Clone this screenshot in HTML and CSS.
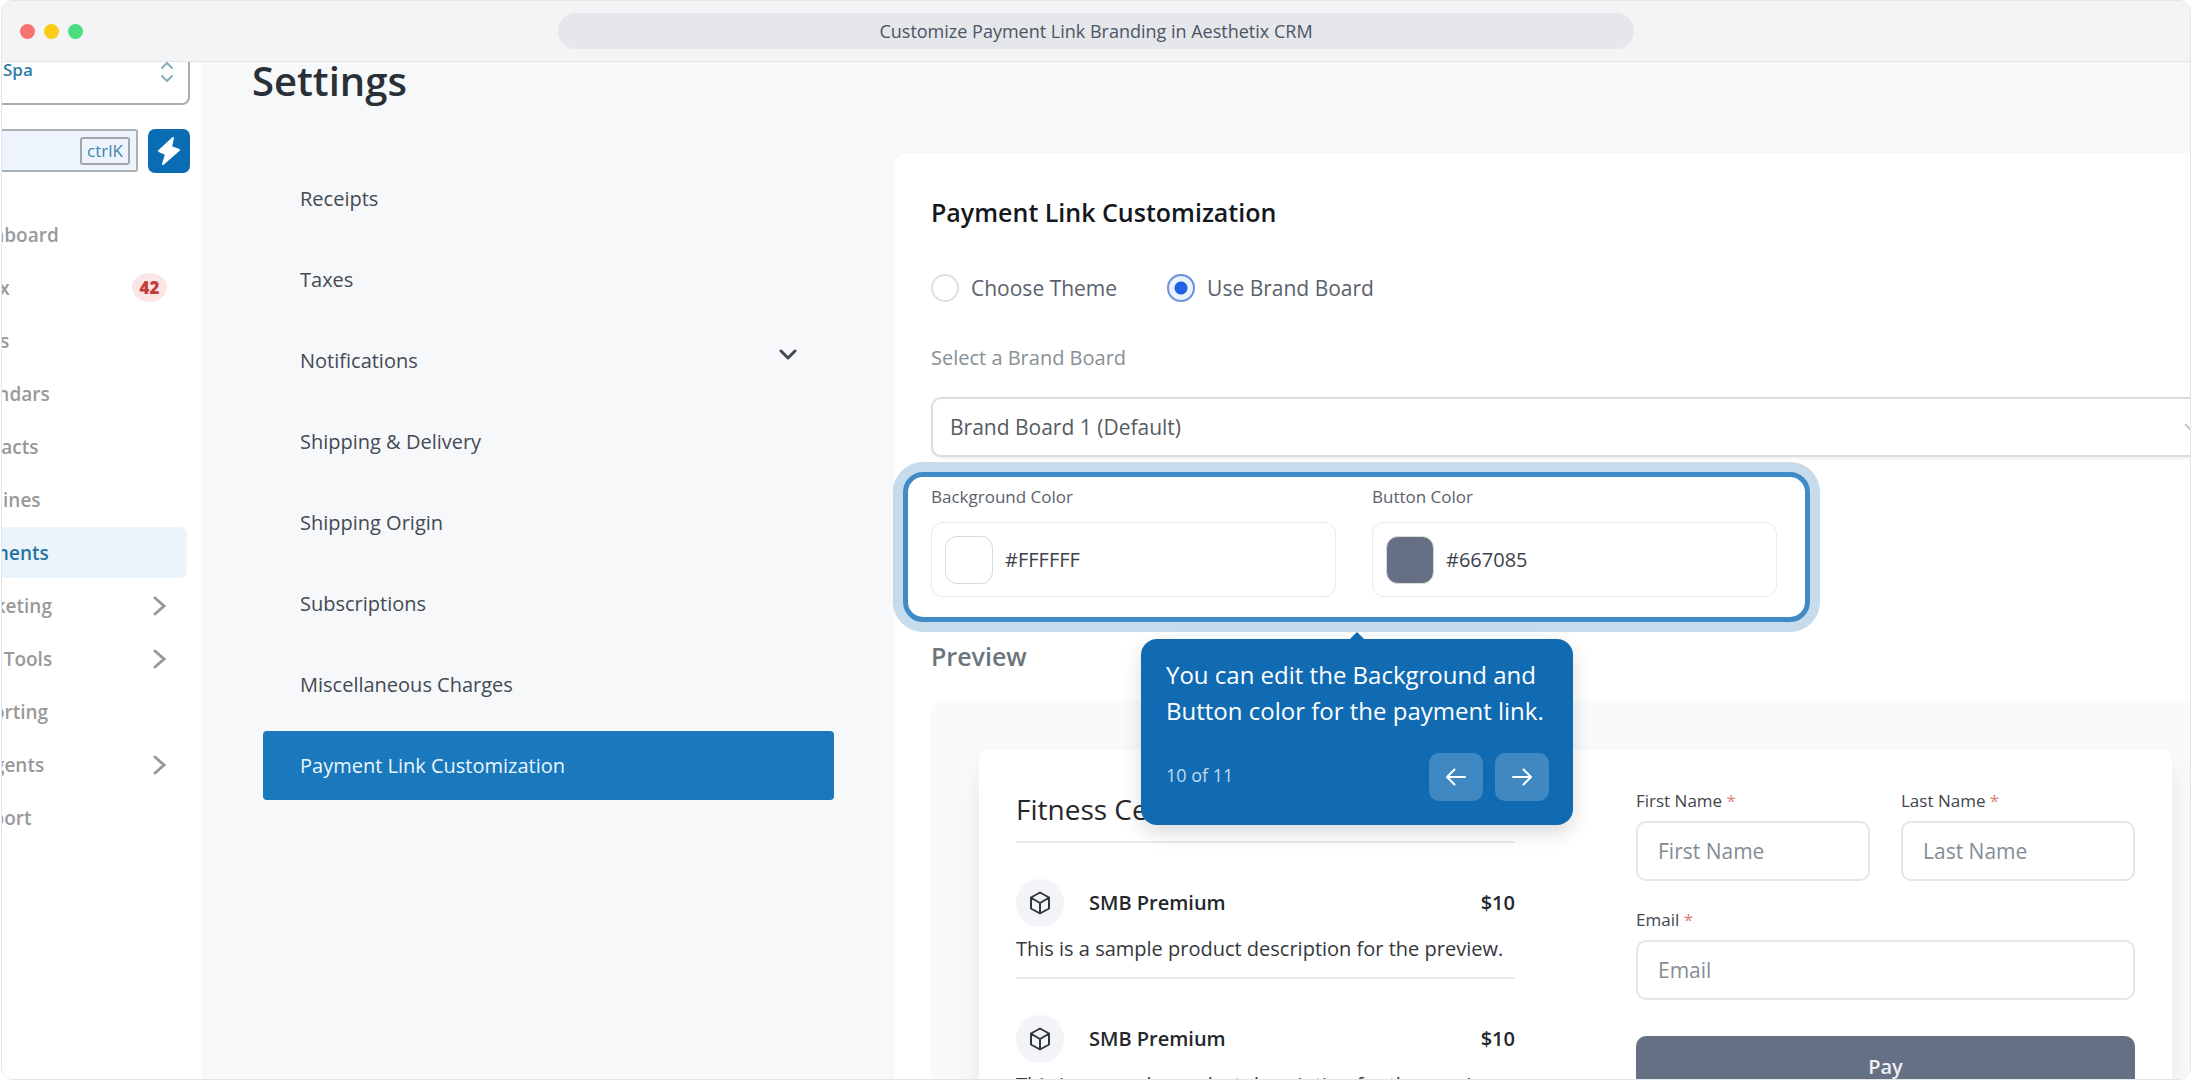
FILE: index.html
```html
<!DOCTYPE html>
<html lang="en">
	<head>
		<meta charset="utf-8">
		<title>Customize Payment Link Branding in Aesthetix CRM</title>
		<link rel="stylesheet" href="styles.css">
	</head>
	<body>
		<div class="window">
			<header class="titlebar">
				<div class="dots">
					<span class="dot red"></span>
					<span class="dot yellow"></span>
					<span class="dot green"></span>
				</div>
				<div class="address">Customize Payment Link Branding in Aesthetix CRM</div>
			</header>

			<div class="app">
				<aside class="sidebar">
					<button class="account" type="button">
						<span>Spa</span>
						<svg width="14" height="20" viewBox="0 0 14 20" fill="none" stroke="currentColor" stroke-width="2" stroke-linecap="round" stroke-linejoin="round"><path d="M2 6l5-5 5 5M2 14l5 5 5-5"/></svg>
					</button>
					<div class="searchRow">
						<div class="search">
							<input class="searchInput" type="search" aria-label="Search">
							<kbd>ctrlK</kbd>
						</div>
						<button class="bolt" type="button" aria-label="Quick actions">
							<svg width="24" height="30" viewBox="0 0 24 30" fill="#fff" stroke="#fff" stroke-width="2" stroke-linejoin="round"><path d="M16 2L2 15l7 3-3 10 16-14-8-3z"/></svg>
						</button>
					</div>
					<nav class="nav">
						<a href="#"><span>Dashboard</span></a>
						<a href="#"><span>Inbox</span><b class="badge">42</b></a>
						<a href="#"><span>Tasks</span></a>
						<a href="#"><span>Calendars</span></a>
						<a href="#"><span>Contacts</span></a>
						<a href="#"><span>Pipelines</span></a>
						<a href="#" class="active"><span>Payments</span></a>
						<a href="#"><span>Marketing</span><svg class="more" viewBox="0 0 14 20"><path d="M2 2l9 8-9 8"/></svg></a>
						<a href="#"><span>Web Tools</span><svg class="more" viewBox="0 0 14 20"><path d="M2 2l9 8-9 8"/></svg></a>
						<a href="#"><span>Reporting</span></a>
						<a href="#"><span>AI Agents</span><svg class="more" viewBox="0 0 14 20"><path d="M2 2l9 8-9 8"/></svg></a>
						<a href="#"><span>Support</span></a>
					</nav>
				</aside>

				<main class="main">
					<h1>Settings</h1>
					<div class="columns">
						<nav class="menu">
							<a href="#">Receipts</a>
							<a href="#">Taxes</a>
							<a href="#">Notifications
								<svg class="down" width="18" height="12" viewBox="0 0 18 12"><path d="M2 2l7 7 7-7"/></svg>
							</a>
							<a href="#">Shipping &amp; Delivery</a>
							<a href="#">Shipping Origin</a>
							<a href="#">Subscriptions</a>
							<a href="#">Miscellaneous Charges</a>
							<a href="#" class="selected">Payment Link Customization</a>
						</nav>

						<section class="panel">
							<h2>Payment Link Customization</h2>
							<div class="radios">
								<label><input type="radio" name="mode"> Choose Theme</label>
								<label><input type="radio" name="mode" checked> Use Brand Board</label>
							</div>

							<label class="selectLabel" for="board">Select a Brand Board</label>
							<div class="selectBox">
								<select id="board">
									<option>Brand Board 1 (Default)</option>
								</select>
								<svg width="18" height="12" viewBox="0 0 18 12" fill="none" stroke="currentColor" stroke-width="2"><path d="M1 2l8 8 8-8"/></svg>
							</div>

							<div class="colors">
								<div class="color">
									<label for="bgColor">Background Color</label>
									<div class="colorBox">
										<span class="swatch white"></span>
										<input id="bgColor" type="text" value="#FFFFFF">
									</div>
								</div>
								<div class="color">
									<label for="btnColor">Button Color</label>
									<div class="colorBox">
										<span class="swatch slate"></span>
										<input id="btnColor" type="text" value="#667085">
									</div>
								</div>

								<!-- tour step: ring and bubble lie over the page -->
								<div class="ring"></div>
								<div class="tip">
									<p>You can edit the Background and Button color for the payment link.</p>
									<div class="tipFoot">
										<span>10 of 11</span>
										<button type="button" aria-label="Previous">
											<svg viewBox="0 0 20 18"><path d="M19 9H1.500M8.500 1.500L1 9l7.500 7.500"/></svg>
										</button>
										<button type="button" aria-label="Next">
											<svg viewBox="0 0 20 18"><path d="M1 9h17.500M11.500 1.500L19 9l-7.500 7.500"/></svg>
										</button>
									</div>
								</div>
							</div>

							<h3>Preview</h3>
							<div class="preview">
								<div class="card">
									<div class="products">
										<h4>Fitness Center</h4>
										<div class="product">
											<div class="productHead">
												<span class="cube"><svg viewBox="0 0 24 24"><path d="M12 1.500l9 5v11l-9 5-9-5v-11zM3.500 7l8.500 5 8.500-5M12 12v10"/></svg></span>
												<span class="name">SMB Premium</span>
												<span>$10</span>
											</div>
											<p>This is a sample product description for the preview.</p>
										</div>
										<div class="product">
											<div class="productHead">
												<span class="cube"><svg viewBox="0 0 24 24"><path d="M12 1.500l9 5v11l-9 5-9-5v-11zM3.500 7l8.500 5 8.500-5M12 12v10"/></svg></span>
												<span class="name">SMB Premium</span>
												<span>$10</span>
											</div>
											<p>This is a sample product description for the preview.</p>
										</div>
									</div>
									<form class="payForm">
										<div class="field">
											<label for="first">First Name <i>*</i></label>
											<input id="first" type="text" placeholder="First Name">
										</div>
										<div class="field">
											<label for="last">Last Name <i>*</i></label>
											<input id="last" type="text" placeholder="Last Name">
										</div>
										<div class="field wide">
											<label for="email">Email <i>*</i></label>
											<input id="email" type="email" placeholder="Email">
										</div>
										<button class="pay wide" type="button">Pay</button>
									</form>
								</div>
							</div>
						</section>
					</div>
				</main>
			</div>
		</div>
	</body>
</html>
```
FILE: styles.css
```css
* {
	box-sizing: border-box;
}
body {
	margin: 0;
	background: #fff;
	font-family: "Open Sans", "Noto Sans", sans-serif;
	color: #434a54;
}
h1, h2, h3, h4, p {
	margin: 0;
}
a {
	color: inherit;
	text-decoration: none;
}
button, input, select {
	font-family: inherit;
}
button {
	border: none;
	padding: 0;
}
svg {
	flex: none;
}

/* window */
.window {
	display: flex;
	flex-direction: column;
	height: 100vh;
	margin: 0 1px;
	border: 1px solid #e3e5e9;
	border-radius: 12px;
	overflow: hidden;
}
.titlebar {
	display: grid;
	grid-template-columns: 1fr auto 1fr;
	align-items: center;
	flex: none;
	height: 61px;
	padding: 0 18px;
	background: #f3f4f6;
	border-bottom: 1px solid #e3e5e9;
}
.dots {
	display: flex;
	gap: 9px;
}
.dot {
	width: 15px;
	height: 15px;
	border-radius: 50%;
}
.red {
	background: #f87171;
}
.yellow {
	background: #facc15;
}
.green {
	background: #4ade80;
}
.address {
	width: 50vw;
	max-width: 1076px;
	border-radius: 18px;
	background: #e5e7eb;
	color: #4b5563;
	font-size: 18px;
	line-height: 36px;
	text-align: center;
}
.app {
	display: flex;
	flex: 1;
	min-height: 0;
	background: #f7f8fa;
	overflow: hidden;
}

/* sidebar */
.sidebar {
	flex: none;
	width: 200px;
	background: #fff;
	overflow: hidden;
}
.account {
	display: flex;
	justify-content: space-between;
	align-items: flex-start;
	width: 188px;
	height: 43px;
	padding: 0 14px 0 1px;
	border: solid #adadad;
	border-width: 0 2px 2px 0;
	border-radius: 0 0 8px 0;
	background: #fff;
	color: #2e7cab;
	font-size: 17px;
	font-weight: 600;
	line-height: 15px;
}
.account svg {
	color: #82aebd;
}
.searchRow {
	display: flex;
	gap: 10px;
	margin-top: 24px;
	padding-right: 12px;
}
.search {
	display: flex;
	flex: 1;
	align-items: center;
	min-width: 0;
	height: 43px;
	margin-left: -4px;
	padding-right: 6px;
	border: 2px solid #adb0b4;
	border-radius: 3px;
	background: #edf4fd;
}
.searchInput {
	flex: 1;
	min-width: 0;
	border: none;
	background: none;
}
.search kbd {
	flex: none;
	width: 50px;
	border: 2px solid #a3a7ab;
	border-radius: 3px;
	color: #4088ad;
	font-family: inherit;
	font-size: 17px;
	line-height: 24px;
	text-align: center;
}
.bolt {
	display: flex;
	align-items: center;
	justify-content: center;
	flex: none;
	width: 42px;
	height: 44px;
	border-radius: 7px;
	background: #0a6cb3;
}
.nav {
	display: flex;
	flex-direction: column;
	gap: 2px;
	margin: 36px 15px 0 0;
}
.nav a {
	display: flex;
	align-items: center;
	justify-content: space-between;
	height: 51px;
	padding-right: 20px;
	border-radius: 0 7px 7px 0;
	color: #999;
	font-size: 19px;
	font-weight: 600;
}
.nav a span {
	margin-left: -44px;
}
.nav .active {
	background: #ebf3fb;
	color: #2574a0;
}
.badge {
	width: 35px;
	border-radius: 50%;
	background: #fbe5e5;
	color: #c43d3d;
	font-size: 17px;
	line-height: 29px;
	text-align: center;
}
.more {
	width: 14px;
	height: 20px;
	fill: none;
	stroke: #999;
	stroke-width: 3;
	stroke-linecap: round;
}

/* settings */
.main {
	flex: 1;
	min-width: 0;
	padding-left: 50px;
}
h1 {
	color: #2a3038;
	font-size: 40px;
	font-weight: 600;
	line-height: 38px;
}
.columns {
	display: flex;
	align-items: flex-start;
	gap: 61px;
	margin: 53px -66px 0 11px;
}
.menu {
	display: flex;
	flex-direction: column;
	flex: none;
	gap: 12px;
	width: 571px;
	padding-top: 11px;
}
.menu a {
	display: flex;
	align-items: center;
	justify-content: space-between;
	height: 69px;
	padding: 0 37px;
	border-radius: 4px;
	font-size: 20px;
}
.menu .selected {
	background: #1a78bc;
	color: #e9f6ff;
}
.down {
	margin-bottom: 12px;
	fill: none;
	stroke: currentColor;
	stroke-width: 3;
	stroke-linecap: round;
	stroke-linejoin: round;
}
.panel {
	flex: 1;
	min-width: 0;
	padding: 43px 36px 36px;
	border-radius: 12px;
	background: #fff;
}
h2, h3 {
	font-size: 25px;
	font-weight: 600;
	line-height: 32px;
}
h2 {
	color: #14181d;
}
.radios {
	display: flex;
	gap: 50px;
	margin-top: 46px;
}
.radios label {
	display: flex;
	align-items: center;
	gap: 12px;
	color: #5a616b;
	font-size: 21px;
	line-height: 28px;
}
.radios input {
	appearance: none;
	width: 28px;
	height: 28px;
	margin: 0;
	border: 2px solid #e1e1e3;
	border-radius: 50%;
}
.radios input:checked {
	border-color: #6b90dc;
	background: radial-gradient(circle, #2160e2 6px, #eaf2fe 7px);
}
.selectLabel {
	display: block;
	margin: 42px 0 25px;
	color: #868f95;
	font-size: 20px;
	line-height: 28px;
}
.selectBox {
	position: relative;
}
.selectBox select {
	appearance: none;
	display: block;
	width: 100%;
	height: 60px;
	padding: 0 17px;
	border: 2px solid #dcdcdc;
	border-radius: 10px;
	background: #fff;
	box-shadow: 0 2px 3px rgba(0, 0, 0, 0.06);
	color: #555b62;
	font-size: 21px;
}
.selectBox svg {
	position: absolute;
	right: 18px;
	top: 25px;
	color: #c4c4c4;
}

/* color fields */
.colors {
	position: relative;
	display: grid;
	grid-template-columns: 1fr 1fr;
	gap: 36px;
	max-width: 846px;
	margin-top: 28px;
}
.color label {
	display: block;
	margin-bottom: 13px;
	color: #5a616b;
	font-size: 17px;
	line-height: 24px;
}
.colorBox {
	display: flex;
	align-items: center;
	gap: 12px;
	height: 75px;
	padding: 0 13px;
	border: 1px solid #ebebed;
	border-radius: 12px;
}
.colorBox input {
	flex: 1;
	min-width: 0;
	padding: 0;
	border: none;
	background: none;
	color: #3c424a;
	font-size: 20px;
}
.swatch {
	width: 48px;
	height: 48px;
	border: 1px solid #d9d9dc;
	border-radius: 12px;
}
.slate {
	background: #667085;
}
.ring {
	position: absolute;
	inset: -13px -33px -25px -28px;
	border: 5px solid #408ac6;
	border-radius: 20px;
	box-shadow: 0 0 0 10px rgba(16, 107, 180, 0.24);
	pointer-events: none;
}

/* tour bubble */
.tip {
	position: absolute;
	top: 154px;
	left: 210px;
	width: 432px;
	padding: 18px 24px 24px 25px;
	border-radius: 16px;
	background: #116bb3;
	box-shadow: 0 8px 20px rgba(0, 0, 0, 0.14);
	color: #fff;
	font-size: 24px;
	line-height: 36px;
	z-index: 2;
}
.tip::before {
	content: "";
	position: absolute;
	top: -5px;
	left: 50%;
	width: 10px;
	height: 10px;
	margin-left: -5px;
	background: #116bb3;
	transform: rotate(45deg);
}
.tipFoot {
	display: flex;
	gap: 12px;
	margin-top: 24px;
}
.tipFoot span {
	flex: 1;
	color: #c3daed;
	font-size: 18px;
	line-height: 44px;
}
.tipFoot button {
	display: flex;
	align-items: center;
	justify-content: center;
	width: 54px;
	height: 48px;
	border-radius: 10px;
	background: rgba(255, 255, 255, 0.2);
}
.tipFoot svg {
	width: 20px;
	height: 18px;
	fill: none;
	stroke: #fff;
	stroke-width: 2;
	stroke-linecap: round;
	stroke-linejoin: round;
}

/* preview */
h3 {
	margin: 43px 0 29px;
	color: #6c757c;
}
.preview {
	padding: 48px;
	border-radius: 12px;
	background: #f9fafc;
}
.card {
	display: grid;
	grid-template-columns: 1fr 1fr;
	gap: 121px;
	padding: 40px 37px;
	border-radius: 12px;
	background: #fff;
	box-shadow: 0 16px 28px rgba(16, 24, 40, 0.08);
}
h4 {
	padding-bottom: 12px;
	border-bottom: 2px solid #ebebeb;
	color: #24282d;
	font-size: 28px;
	font-weight: 400;
	line-height: 40px;
}
.product {
	padding: 36px 0 14px;
	border-bottom: 2px solid #ebebeb;
	color: #33373c;
	font-size: 20px;
	line-height: 28px;
}
.product p {
	margin-top: 8px;
}
.productHead {
	display: flex;
	align-items: center;
	gap: 25px;
	color: #24282d;
	font-weight: 600;
}
.name {
	flex: 1;
}
.cube {
	display: flex;
	align-items: center;
	justify-content: center;
	width: 48px;
	height: 48px;
	border-radius: 50%;
	background: #f3f4f8;
}
.cube svg {
	width: 24px;
	height: 24px;
	fill: none;
	stroke: #33373f;
	stroke-width: 2;
	stroke-linejoin: round;
}
.payForm {
	display: grid;
	grid-template-columns: 1fr 1fr;
	align-content: start;
	gap: 27px 31px;
}
.wide {
	grid-column: 1 / -1;
}
.field label {
	display: block;
	margin-bottom: 8px;
	color: #3f454d;
	font-size: 17px;
	line-height: 24px;
}
.field i {
	color: #e07c7c;
	font-style: normal;
}
.field input {
	display: block;
	width: 100%;
	height: 60px;
	padding: 0 20px;
	border: 2px solid #e6e6e8;
	border-radius: 10px;
	font-size: 21px;
}
.field input::placeholder {
	color: #848d95;
}
.pay {
	height: 60px;
	margin-top: 9px;
	border-radius: 10px;
	background: #667085;
	color: #eef0f4;
	font-size: 20px;
	font-weight: 600;
}
```
